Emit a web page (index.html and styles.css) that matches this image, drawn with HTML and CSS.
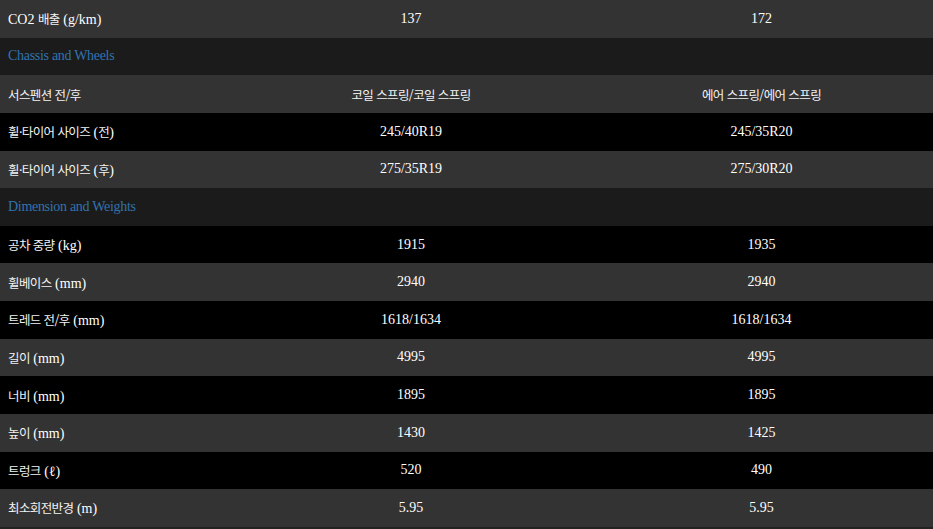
FILE: index.html
```html
<!DOCTYPE html>
<html lang="ko">
<head>
<meta charset="utf-8">
<title>Specs</title>
<link rel="stylesheet" href="styles.css">
</head>
<body>
<table class="spec">
  <colgroup>
    <col class="c-label">
    <col class="c-a">
    <col class="c-b">
  </colgroup>
  <tbody>
    <tr class="odd"><td>CO2 <span class="ko">배출</span> (g/km)</td><td>137</td><td>172</td></tr>
  </tbody>
  <tbody>
    <tr class="section"><td colspan="3">Chassis and Wheels</td></tr>
    <tr class="odd"><td><span class="ko">서스펜션 전/후</span></td><td><span class="ko">코일 스프링/코일 스프링</span></td><td><span class="ko">에어 스프링/에어 스프링</span></td></tr>
    <tr class="even"><td><span class="ko">휠·타이어 사이즈</span> (<span class="ko">전</span>)</td><td>245/40R19</td><td>245/35R20</td></tr>
    <tr class="odd"><td><span class="ko">휠·타이어 사이즈</span> (<span class="ko">후</span>)</td><td>275/35R19</td><td>275/30R20</td></tr>
  </tbody>
  <tbody>
    <tr class="section"><td colspan="3">Dimension and Weights</td></tr>
    <tr class="even"><td><span class="ko">공차 중량</span> (kg)</td><td>1915</td><td>1935</td></tr>
    <tr class="odd"><td><span class="ko">휠베이스</span> (mm)</td><td>2940</td><td>2940</td></tr>
    <tr class="even"><td><span class="ko">트레드 전/후</span> (mm)</td><td>1618/1634</td><td>1618/1634</td></tr>
    <tr class="odd"><td><span class="ko">길이</span> (mm)</td><td>4995</td><td>4995</td></tr>
    <tr class="even"><td><span class="ko">너비</span> (mm)</td><td>1895</td><td>1895</td></tr>
    <tr class="odd"><td><span class="ko">높이</span> (mm)</td><td>1430</td><td>1425</td></tr>
    <tr class="even"><td><span class="ko">트렁크</span> (ℓ)</td><td>520</td><td>490</td></tr>
    <tr class="odd"><td><span class="ko">최소회전반경</span> (m)</td><td>5.95</td><td>5.95</td></tr>
  </tbody>
</table>
</body>
</html>
```
FILE: styles.css
```css
html, body {
  margin: 0;
  padding: 0;
  background: #222222;
}
body {
  font-family: "Liberation Serif", "Noto Sans CJK KR", serif;
  font-size: 14px;
  color: #ffffff;
}
.spec {
  width: 933px;
  border-collapse: collapse;
  table-layout: fixed;
}
.c-label { width: 236px; }
.c-a { width: 350px; }
.c-b { width: 347px; }
.spec tr {
  height: 37.64px;
}
.spec td {
  padding: 0;
  vertical-align: middle;
  text-align: center;
  white-space: nowrap;
}
.spec td:first-child {
  text-align: left;
  padding-left: 8px;
}
.spec td:nth-child(3) {
  padding-left: 4px;
}
.ko {
  font-family: "Noto Sans CJK KR", sans-serif;
  font-size: 12.5px;
  letter-spacing: -0.6px;
  color: #f2f2f2;
}
.spec .odd { background: #333333; }
.spec .even { background: #000000; }
.spec .section { background: #1b1b1b; }
.spec .section td {
  color: #3273ad;
  text-align: left;
  padding-left: 8px;
  letter-spacing: -0.3px;
}
```
